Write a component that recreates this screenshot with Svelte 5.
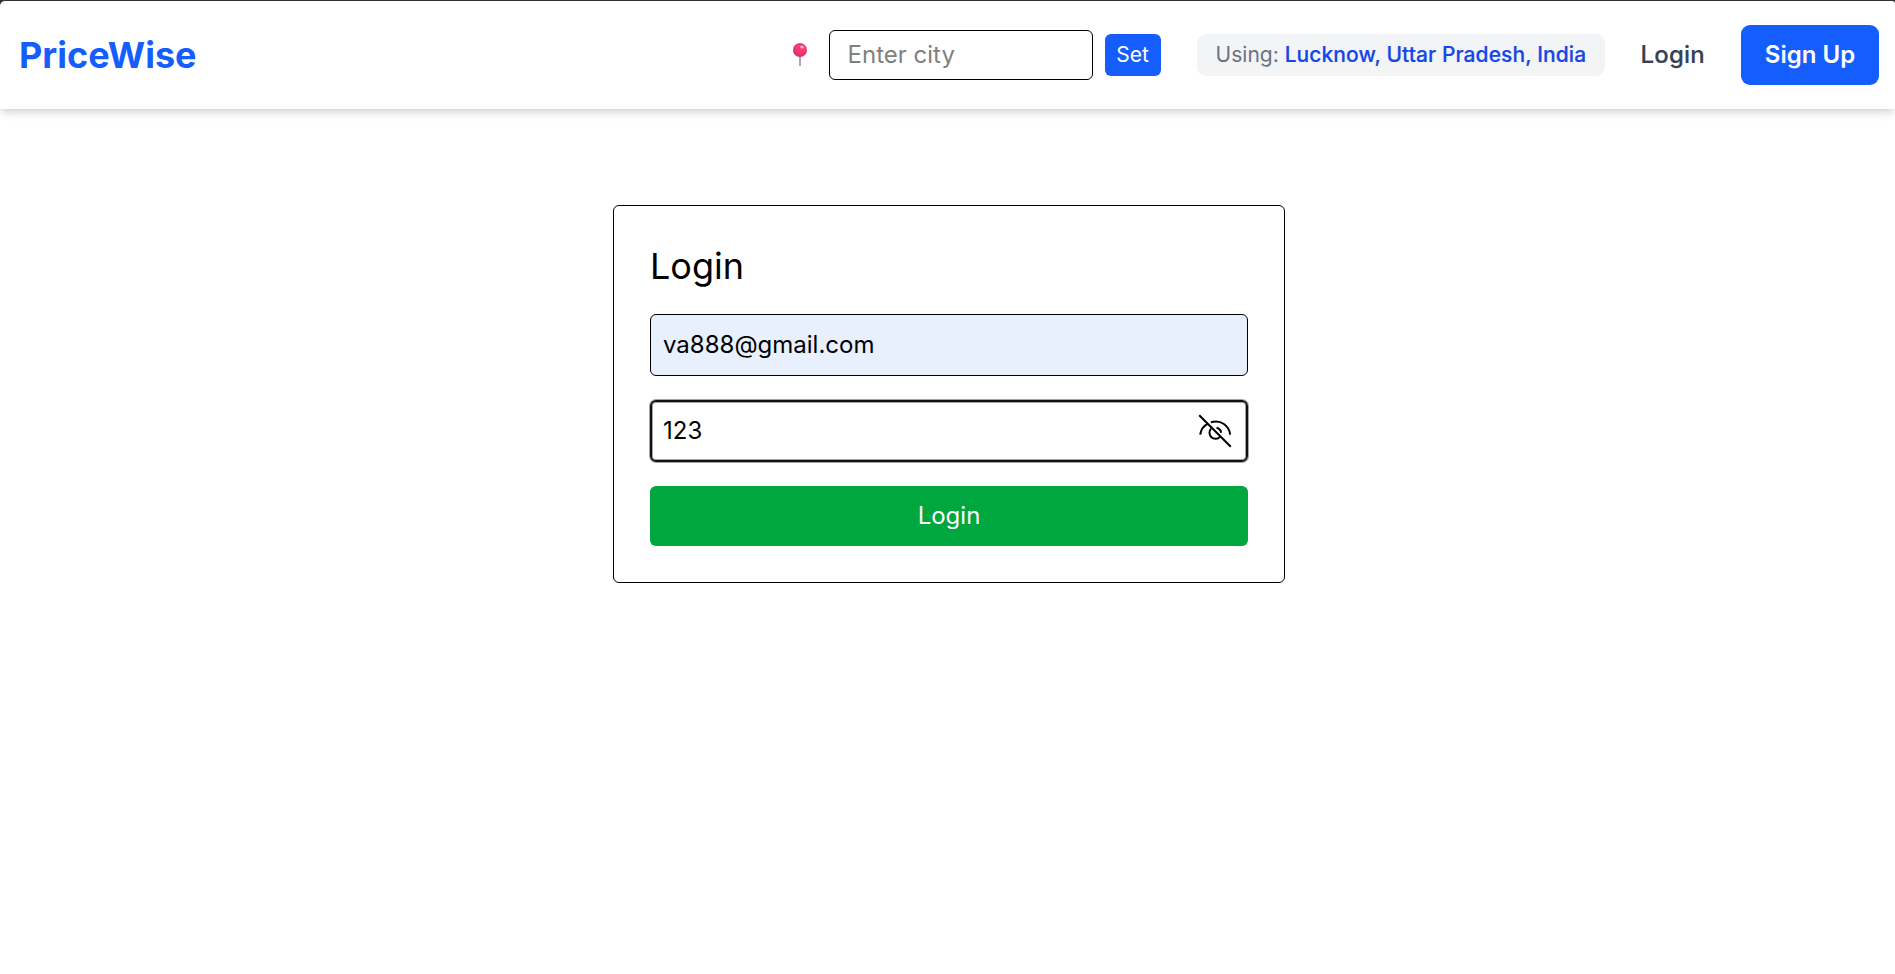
<script lang="ts">
  let city = $state('');
  let email = $state('va888@gmail.com');
  let password = $state('123');
</script>

<div class="page">
  <header>
    <div class="logo">PriceWise</div>
    <nav>
      <div class="location">
        <svg class="pin" viewBox="0 0 14 24" width="14" height="24" aria-hidden="true">
          <defs>
            <radialGradient id="pin-head" cx="0.58" cy="0.36" r="0.65">
              <stop offset="0.45" stop-color="#fa3c75" />
              <stop offset="1" stop-color="#c92f68" />
            </radialGradient>
          </defs>
          <path d="M6.2 13h1.6v9.6a.8.8 0 0 1-1.6 0z" fill="#9b8fae" />
          <circle cx="7" cy="7" r="7" fill="url(#pin-head)" />
          <ellipse cx="9" cy="4" rx="1.9" ry="1.6" fill="#ffb4cb" />
        </svg>
        <input class="city" type="text" placeholder="Enter city" bind:value={city} />
        <button class="set">Set</button>
      </div>
      <div class="using">Using: <span>Lucknow, Uttar Pradesh, India</span></div>
      <a class="login-link" href="#login">Login</a>
      <button class="signup">Sign Up</button>
    </nav>
  </header>
  <main>
    <form class="card">
      <h1>Login</h1>
      <input class="field email" type="text" bind:value={email} />
      <div class="field password">
        <input type="text" bind:value={password} />
        <svg class="eye" viewBox="0 0 36 36" width="36" height="36" fill="none" stroke="#000" stroke-width="2" aria-hidden="true">
          <path d="M2.200 2.200 33.800 33.800" />
          <path d="M3.200 21.600C4 16.500 6.800 12.900 10.800 10.700M14 9.300C24 6.500 32 12.500 33.200 21.600" />
          <path d="M14 15.700A6 6 0 1 0 23 23.800M19.500 14.800A6.200 6.200 0 0 1 24.200 19.700" />
        </svg>
      </div>
      <button class="submit" type="button">Login</button>
    </form>
  </main>
</div>

<style>
  :global(body) {
    background: #3a3739;
    overflow: hidden;
  }
  .page, .page * {
    box-sizing: border-box;
  }
  .page {
    height: 974px;
    border-top: 1px solid #353234;
    font: 24px/36px Inter, sans-serif;
    color: #000;
    display: flex;
    flex-direction: column;
  }
  input, button {
    font: inherit;
    margin: 0;
    outline: none;
  }
  button {
    border: 0;
    color: #fff;
  }
  header {
    height: 108px;
    flex: none;
    padding: 24px 16px 24px 19px;
    display: flex;
    align-items: center;
    justify-content: space-between;
    background: #fff;
    border-radius: 5px 3px 0 0;
    box-shadow: 0 6px 9px -1px rgba(0, 0, 0, 0.1), 0 3px 6px -2px rgba(0, 0, 0, 0.1);
    position: relative;
  }
  .logo {
    font-size: 36px;
    line-height: 48px;
    font-weight: 700;
    color: #155dfc;
  }
  nav, .location {
    display: flex;
    align-items: center;
  }
  nav {
    gap: 36px;
  }
  .location {
    gap: 12px;
  }
  .pin {
    margin-right: 10px;
  }
  .city {
    width: 264px;
    height: 50px;
    padding: 5px 18px 7px;
    border: 1px solid #000;
    border-radius: 6px;
    background: #fff;
  }
  .city::placeholder {
    color: #808080;
    opacity: 1;
  }
  .set {
    width: 56px;
    height: 42px;
    padding: 0;
    font-size: 21px;
    line-height: 30px;
    border-radius: 6px;
    background: #155dfc;
  }
  .using {
    width: 408px;
    padding: 6px 17px 6px 19px;
    font-size: 21px;
    line-height: 30px;
    white-space: nowrap;
    color: #6a7282;
    background: #f3f4f6;
    border-radius: 9px;
  }
  .using span {
    font-weight: 500;
    letter-spacing: 0.09px;
    -webkit-text-stroke: 0.2px #1447e6;
    color: #1447e6;
  }
  .login-link {
    font-weight: 500;
    letter-spacing: 0.2px;
    -webkit-text-stroke: 0.2px #364153;
    color: #364153;
    text-decoration: none;
  }
  .signup {
    width: 138px;
    height: 60px;
    padding: 0;
    font-weight: 600;
    border-radius: 9px;
    background: #155dfc;
  }
  main {
    flex: 1;
    padding-top: 96px;
    padding-left: 3px;
    background: #fff;
    display: flex;
    justify-content: center;
    align-items: flex-start;
  }
  .card {
    width: 672px;
    padding: 36px;
    border: 1px solid #000;
    border-radius: 6px;
    display: flex;
    flex-direction: column;
    gap: 24px;
  }
  h1 {
    margin: 0;
    font-size: 36px;
    line-height: 48px;
    font-weight: 400;
  }
  .field {
    height: 62px;
    padding: 11px 12px 13px;
    border: 1px solid #000;
    border-radius: 6px;
  }
  .email {
    background: #e8f0fe;
  }
  .password {
    display: flex;
    align-items: center;
    justify-content: space-between;
    padding: 0 13px 0 11px;
    border: 2px solid #101010;
    box-shadow: 0 0 0 1px #a3a5a3, inset 0 0 0 1px #a3a5a3;
  }
  .password input {
    flex: 1;
    min-width: 0;
    border: 0;
    padding: 0;
    background: transparent;
  }
  .submit {
    height: 60px;
    border-radius: 6px;
    background: #00a63e;
  }
</style>
